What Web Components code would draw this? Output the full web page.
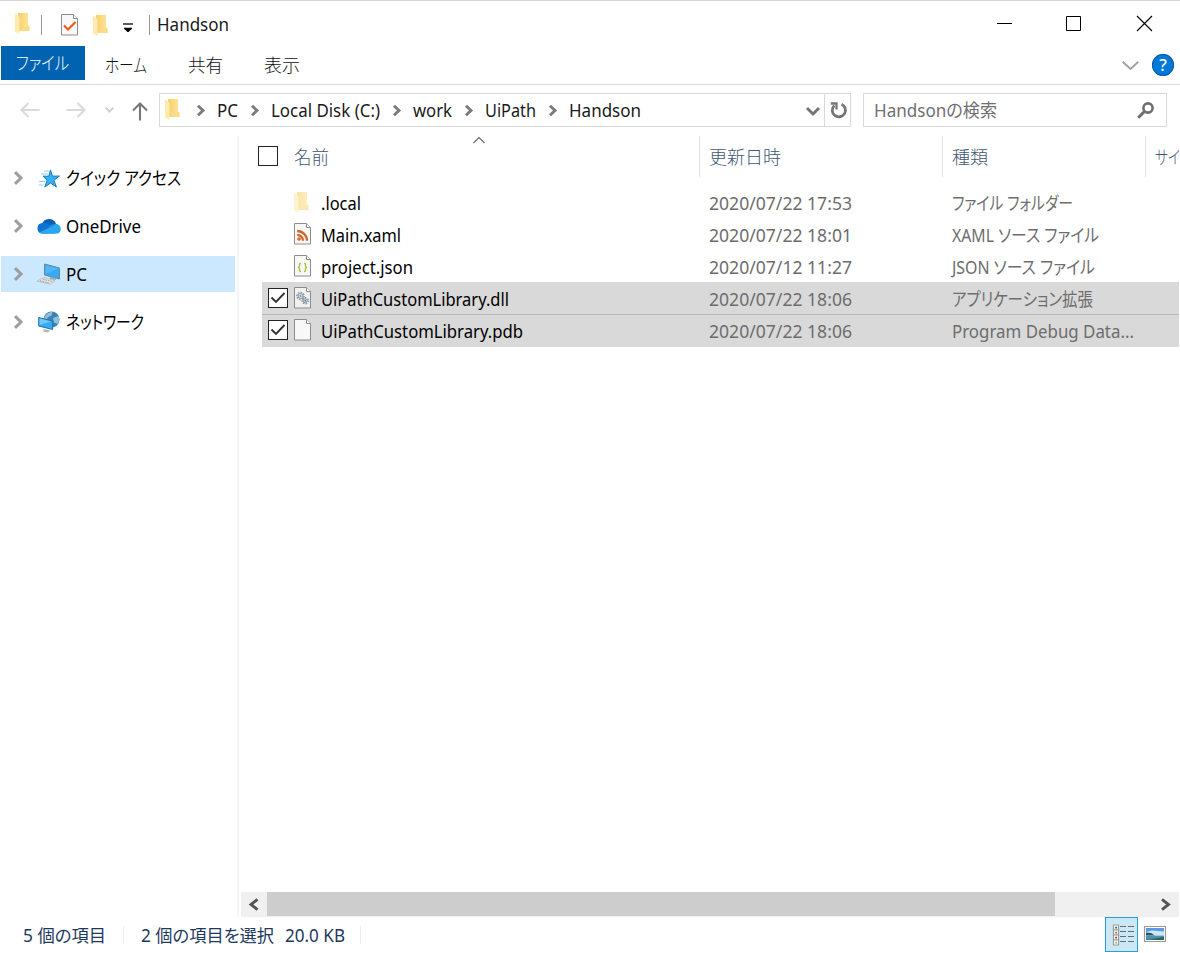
<!DOCTYPE html>
<html lang="ja">
<head>
<meta charset="utf-8">
<title>Handson</title>
<style>
  html, body { margin: 0; height: 100%; overflow: hidden; }
  body {
    background: #fff;
    font-family: "Noto Sans", "Noto Sans CJK JP", sans-serif;
    font-feature-settings: "palt"; /* narrow kana */
    font-size: 18px;
    line-height: 32px;
    color: #1a1a1a;
  }
</style>
</head>
<body>
<explorer-window></explorer-window>

<script>
const page = (fill = "#f8f8f8") => `
  <path d="M.5 .5h12l4 4v16.500H.5z" fill="${fill}" stroke="#8c8c8c"/>
  <path d="M12.500 .5v4h4" fill="#fff" stroke="#8c8c8c"/>`

const folder = `
  <path d="M3 0h10v13h1.500v5H3z" fill="url(#f)"/>
  <path d="M13 12.500l1.500 1v4.500H4z" fill="#f9dc85"/>
  <path d="M0 .5l4.500 3.500v17L0 18.500z" fill="#ffebae"/>
  <defs><linearGradient id="f"><stop stop-color="#f5d06c"/><stop offset="1" stop-color="#ffe59a"/></linearGradient></defs>`

const gear = (x, y, r) => `
  <circle cx="${x}" cy="${y}" r="${r}" fill="none" stroke="#8797a2" stroke-width="1.600" stroke-dasharray="1.500 1.200"/>
  <circle cx="${x}" cy="${y}" r="${r - 1}" fill="#dce4e8" stroke="#8797a2"/>
  <circle cx="${x}" cy="${y}" r=".9" fill="#72828e"/>`

// name: [width, height, markup]
const ICONS = {
  folder: [15, 21, folder],
  task: [17, 22, page() + `<path d="M3 11.500l4 4 7.500-7.500" fill="none" stroke="#f05a14" stroke-width="2.200"/>`],
  xaml: [17, 22, page() + `<circle cx="5" cy="16" r="1.800" fill="#d2672d"/><path d="M3.200 11.800a6 6 0 0 1 5.800 6M3.200 8a9.800 9.800 0 0 1 9.800 9.800" fill="none" stroke="#d2672d" stroke-width="2.300"/>`],
  json: [17, 22, page() + `<path d="M7 8.500H6.500q-1 0-1 1v2l-1 1 1 1v2q0 1 1 1H7M10 8.500h.5q1 0 1 1v2l1 1-1 1v2q0 1-1 1H10" fill="none" stroke="#b5bd3a" stroke-width="1.300"/>`],
  dll: [17, 22, page("#f0f0f0") + gear(6.500, 9, 3.500) + gear(11.200, 13.700, 3)],
  blank: [17, 22, page()],
  menu: [10, 9, `<path d="M0 1h10" stroke="#000" stroke-width="1.300"/><path d="M1 4.700h8v1L5.500 9h-1L1 5.700z"/>`],
  min: [15, 15, `<path d="M0 7.500h15" stroke="#000"/>`],
  max: [15, 15, `<path d="M.5 .5h14v14H.5z" fill="none" stroke="#000"/>`],
  close: [15, 15, `<path d="M0 0l15 15M15 0L0 15" stroke="#000" stroke-width="1.100"/>`],
  ribbon: [17, 9, `<path d="M.7 .7l7.800 7.300L16.300 .7" fill="none" stroke="#a0a0a0" stroke-width="1.900"/>`],
  back: [20, 16, `<path d="M19.500 8H1.500M8.500 1l-7 7 7 7" fill="none" stroke="#dadada" stroke-width="2.200"/>`],
  forward: [20, 16, `<path d="M.5 8h18M11.500 1l7 7-7 7" fill="none" stroke="#dadada" stroke-width="2.200"/>`],
  recent: [9, 6, `<path d="M.7 .7l3.800 3.800L8.300 .7" fill="none" stroke="#d0d0d0" stroke-width="2"/>`],
  up: [16, 19, `<path d="M8 18.500V1.500M1 8.500l7-7 7 7" fill="none" stroke="#777" stroke-width="2.100"/>`],
  crumb: [8, 11, `<path d="M1 .8l5 4.700-5 4.700" fill="none" stroke="#7a7a7a" stroke-width="2.900"/>`],
  expand: [9, 14, `<path d="M1 1.200l6 5.800-6 5.800" fill="none" stroke="#999" stroke-opacity=".95" stroke-width="3"/>`],
  down: [14, 9, `<path d="M1 1l6 6 6-6" fill="none" stroke="#757575" stroke-width="2.900"/>`],
  refresh: [17, 18, `<path d="M11.500 3.200A6.600 6.600 0 1 1 4.300 4.500" fill="none" stroke="#757575" stroke-width="2.800"/><path d="M.8 2.500h5.700v6" fill="none" stroke="#757575" stroke-width="2.300"/>`],
  search: [17, 17, `<circle cx="11" cy="6" r="4.600" fill="none" stroke="#6e6e6e" stroke-width="2.600"/><path d="M7.700 9.300L1.200 15.800" stroke="#6e6e6e" stroke-width="3"/>`],
  sort: [12, 7, `<path d="M.5 6L6 .5 11.500 6" fill="none" stroke="#666" stroke-width="1.100"/>`],
  check: [16, 12, `<path d="M1.500 5.500l4.500 4.500L14.500 1" fill="none" stroke="#333" stroke-width="1.900"/>`],
  left: [10, 12, `<path d="M8.500 .3L2 5.500l6.500 5.200" fill="none" stroke="#555" stroke-width="2.900"/>`],
  right: [10, 12, `<path d="M2 .3l6.500 5.200L2 10.700" fill="none" stroke="#555" stroke-width="2.900"/>`],
  star: [22, 19, `<path d="M12.500 1l2 6.200 7-.2-5.600 4.300 2.500 6.700-5.900-4-5.700 4 2.300-6.700-4-4.100 5.700 0z" fill="#35b2f5" stroke="#1278bd"/><path d="M6 2h5M3 5h7M1 12.500h6M1 16h4" stroke="#7cbfe6" stroke-width=".8"/>`],
  cloud: [24, 16, `<path d="M5 6a7.500 7.500 0 0 1 14-.5L14 11z" fill="#0a5fb5"/><path d="M4.800 15.500A5.300 5.300 0 0 1 5.500 5c4-.8 7 2 10 4.500L18 15.500z" fill="#0c73cf"/><path d="M11 9.200c2.500-3 7-4 9.300-2.200l-5 4z" fill="#188ade"/><path d="M2 14.500L16 8l3-2c5 0 6.500 7 2.500 9.300-1.500.7-16 .7-17.500.2z" fill="#2aa7ee"/>`],
  pc: [24, 22, `<path d="M7.500 1l15 4v11l-15-4z" fill="#37aaf3" stroke="#65889e"/><path d="M8.500 2.300l13 3.500L8.500 11z" fill="#60c2fb" opacity=".6"/><path d="M13 13.500l6 1.500v2l-6-1z" fill="#9aa8b0"/><path d="M0 18l7-3.500 11 3.200-5 3.500z" fill="#e1e5e7" stroke="#a9b2b7" stroke-width=".7"/><path d="M3 17.700l9 2.300M6 16.200l9 2.300" stroke="#9aa4aa" stroke-dasharray="1.500 1"/>`],
  network: [22, 22, `<circle cx="13.500" cy="8.500" r="8" fill="#3b83b3"/><path d="M6.500 6q3-5 8-5.200l-1 3.700-4 2-1 4-3-1zM15 7l5.500-2q2 4-.5 8l-4-1.500z" fill="#8fbfd8"/><path d="M.7 6.500l14 3.500v8.500l-14-3.500z" fill="#37aaf3" stroke="#25729f"/><path d="M1.500 7.500l11.500 3-11.500 3.500z" fill="#6bcaff"/><path d="M6 18l6 1.500-2 2-5-1z" fill="#b0babf"/>`],
  details: [22, 22, [0, 5, 10, 15].map((y, i) => `<path d="M1.500 ${y + 1}h5v5h-5z" fill="#fff" stroke="#999" stroke-width="1.200"/><path d="M3.200 ${y + 2.700}h1.800v1.800H3.200z" fill="${["#276a68", "#6a7a4c", "#b02a1f", "#8fae75"][i]}"/><path d="M8 ${y + 2.500}h6M16 ${y + 2.500}h6" stroke="#6b6b6b"/>`).join("")],
  picture: [22, 16, `<path d="M.5 .5h21v15H.5z" fill="#fff" stroke="#999" stroke-width="1.200"/><path d="M2 2h18v6H2z" fill="#5c98e5"/><path d="M2 6l6-1.500 12 1V9H2z" fill="#cce8f8"/><path d="M2 6.500l5 .5 4 2.500H2z" fill="#285b52"/><path d="M2 9.500h18V14H2z" fill="#4b8fb5"/><path d="M2 14l18-3v3z" fill="#286b4d"/>`]
}

class UiIcon extends HTMLElement {
  connectedCallback() {
    const [w, h, body] = ICONS[this.getAttribute("name")]
    this.attachShadow({ mode: "open" }).innerHTML = `
      <style>
        :host { display: block; flex: none; width: ${w}px; height: ${h}px; }
        svg { display: block; overflow: visible; }
      </style>
      <svg width="${w}" height="${h}" viewBox="0 0 ${w} ${h}">${body}</svg>`
  }
}
customElements.define("ui-icon", UiIcon)

// One line of text squeezed or stretched to the width in its "w" attribute
class FitText extends HTMLElement {
  connectedCallback() {
    const w = Number(this.getAttribute("w"))
    this.attachShadow({ mode: "open" }).innerHTML = `
      <style>
        :host { display: block; flex: none; width: ${w}px; white-space: nowrap; }
        span { display: inline-block; transform-origin: 0 50%; vertical-align: top; }
      </style>
      <span><slot></slot></span>`
    const span = this.shadowRoot.querySelector("span")
    span.style.transform = `scaleX(${w / span.getBoundingClientRect().width})`
  }
}
customElements.define("fit-text", FitText)

class TitleBar extends HTMLElement {
  constructor() {
    super()
    this.attachShadow({ mode: "open" }).innerHTML = `
      <style>
        :host { display: flex; height: 45px; border-top: 1px solid #d5d5d5; box-sizing: border-box; padding: 0 28px 0 15px; align-items: center; }
        i { width: 1px; height: 20px; background: #999; margin-top: 3px; }
        .first { margin: 1px 11px 0 0; }
        .task { margin: 4px 16px 0 19px; }
        .second { margin: 5px 15px 0 -1px; }
        .menu { margin: 8px 16px 0 0; }
        fit-text { margin: 2px auto 0 7px; }
        .buttons { display: flex; gap: 54px; margin-top: 1px; }
        .buttons ui-icon:last-child { margin-left: 2px; }
      </style>
      <ui-icon class="first" name="folder"></ui-icon><i></i>
      <ui-icon class="task" name="task"></ui-icon>
      <ui-icon class="second" name="folder"></ui-icon>
      <ui-icon class="menu" name="menu"></ui-icon><i></i>
      <fit-text w="72">Handson</fit-text>
      <div class="buttons">
        <ui-icon name="min"></ui-icon>
        <ui-icon name="max"></ui-icon>
        <ui-icon name="close"></ui-icon>
      </div>`
  }
}
customElements.define("title-bar", TitleBar)

class RibbonTabs extends HTMLElement {
  constructor() {
    super()
    this.attachShadow({ mode: "open" }).innerHTML = `
      <style>
        :host { display: flex; height: 40px; box-sizing: border-box; border-bottom: 1px solid #dadada; padding: 1px 6px 0 1px; align-items: flex-start; font-weight: 300; color: #111; }
        .file { background: #0063b1; color: #fff; height: 34px; width: 84px; box-sizing: border-box; padding: 1px 0 0 15px; }
        .tab { margin-top: 3px; }
        .help { width: 22px; height: 22px; border-radius: 50%; background: #0078d7; box-shadow: inset 0 0 0 1px #0c5ea5; color: #fff; font-size: 17px; font-weight: 500; line-height: 22px; text-align: center; margin: 8px 0 0 13px; }
      </style>
      <div class="file"><fit-text w="53">ファイル</fit-text></div>
      <fit-text class="tab" w="42" style="margin-left:20px">ホーム</fit-text>
      <fit-text class="tab" w="35" style="margin-left:41px">共有</fit-text>
      <fit-text class="tab" w="36" style="margin-left:41px">表示</fit-text>
      <ui-icon name="ribbon" style="margin:15px 0 0 auto"></ui-icon>
      <div class="help">?</div>`
  }
}
customElements.define("ribbon-tabs", RibbonTabs)

class AddressBar extends HTMLElement {
  constructor() {
    super()
    this.attachShadow({ mode: "open" }).innerHTML = `
      <style>
        :host { display: flex; height: 51px; padding: 8px 13px 0 20px; box-sizing: border-box; align-items: flex-start; }
        .nav { display: flex; align-items: center; height: 34px; width: 139px; }
        .box { display: flex; align-items: center; height: 34px; box-sizing: border-box; border: 1px solid #d9d9d9; }
        .path { width: 692px; padding-left: 5px; }
        .refresh { height: 32px; width: 26px; border-left: 1px solid #d9d9d9; margin-left: 4px; display: grid; place-items: center; box-sizing: border-box; }
        .search { width: 304px; margin-left: 12px; padding: 0 12px 0 10px; justify-content: space-between; color: #707070; }
        fit-text { margin-top: -1px; }
      </style>
      <div class="nav">
        <ui-icon name="back"></ui-icon>
        <ui-icon name="forward" style="margin-left:26px"></ui-icon>
        <ui-icon name="recent" style="margin-left:19px"></ui-icon>
        <ui-icon name="up" style="margin:3px 0 0 18px"></ui-icon>
      </div>
      <div class="box path">
        <ui-icon name="folder" style="margin-top:-2px"></ui-icon>
        <ui-icon name="crumb" style="margin-left:17px"></ui-icon>
        <fit-text w="21" style="margin-left:12px">PC</fit-text>
        <ui-icon name="crumb" style="margin-left:13px"></ui-icon>
        <fit-text w="109" style="margin-left:12px">Local Disk (C:)</fit-text>
        <ui-icon name="crumb" style="margin-left:13px"></ui-icon>
        <fit-text w="39" style="margin-left:12px">work</fit-text>
        <ui-icon name="crumb" style="margin-left:13px"></ui-icon>
        <fit-text w="51" style="margin-left:12px">UiPath</fit-text>
        <ui-icon name="crumb" style="margin-left:13px"></ui-icon>
        <fit-text w="72" style="margin-left:12px">Handson</fit-text>
        <ui-icon name="down" style="margin:3px 0 0 auto"></ui-icon>
        <div class="refresh"><ui-icon name="refresh" style="margin-left:2px"></ui-icon></div>
      </div>
      <div class="box search">
        <fit-text w="123">Handsonの検索</fit-text>
        <ui-icon name="search"></ui-icon>
      </div>`
  }
}
customElements.define("address-bar", AddressBar)

class NavItem extends HTMLElement {
  connectedCallback() {
    this.attachShadow({ mode: "open" }).innerHTML = `
      <style>
        :host { display: grid; grid-template-columns: 21px 31px auto; align-items: center; justify-content: start; height: 36px; padding-left: 13px; color: #000; }
        :host([selected]) { background: #cce8ff; }
        .pic { display: grid; place-items: center; width: 28px; }
      </style>
      <ui-icon name="expand"></ui-icon>
      <div class="pic"><ui-icon name="${this.getAttribute("icon")}"></ui-icon></div>
      <fit-text w="${this.getAttribute("w")}">${this.getAttribute("label")}</fit-text>`
  }
}
customElements.define("nav-item", NavItem)

class CheckBox extends HTMLElement {
  connectedCallback() {
    this.attachShadow({ mode: "open" }).innerHTML = `
      <style>
        :host { display: grid; place-items: center; width: 20px; height: 20px; box-sizing: border-box; border: 1px solid #222; background: #fff; }
      </style>
      ${this.hasAttribute("checked") ? `<ui-icon name="check"></ui-icon>` : ""}`
  }
}
customElements.define("check-box", CheckBox)

class FileHeader extends HTMLElement {
  constructor() {
    super()
    this.attachShadow({ mode: "open" }).innerHTML = `
      <style>
        :host { display: grid; grid-template-columns: 460px 243px 203px 35px; height: 41px; color: #3f5672; font-weight: 300; }
        div { display: flex; align-items: center; padding-left: 9px; border-left: 1px solid #e2e2e2; box-sizing: border-box; }
        .name { padding-left: 19px; border: 0; position: relative; }
        check-box { margin-right: 16px; margin-top: -1px; }
        .sort { position: absolute; left: 233.500px; top: 1px; }
      </style>
      <div class="name"><check-box></check-box><fit-text w="35">名前</fit-text><ui-icon class="sort" name="sort"></ui-icon></div>
      <div><fit-text w="72">更新日時</fit-text></div>
      <div><fit-text w="36">種類</fit-text></div>
      <div><fit-text w="25">サイ</fit-text></div>`
  }
}
customElements.define("file-header", FileHeader)

class FileRow extends HTMLElement {
  connectedCallback() {
    const at = name => this.getAttribute(name)
    this.attachShadow({ mode: "open" }).innerHTML = `
      <style>
        :host { display: grid; grid-template-columns: 32px 27px 388px 243px auto; align-items: center; justify-content: start; height: 32px; margin: 0 1px 0 23px; color: #6d6d6d; }
        :host([selected]) { background: #d9d9d9; box-shadow: inset 0 1px #b8b8b8; }
        :host([first]) { box-shadow: none; }
        :host([last]) { padding-bottom: 1px; }
        check-box { margin: 0 0 0 6px; }
        fit-text { line-height: 30px; margin-top: 2px; }
        .faded { opacity: .6; }
        .name { color: #000; }
      </style>
      ${this.hasAttribute("selected") ? "<check-box checked></check-box>" : "<i></i>"}
      <ui-icon class="${at("icon") === "folder" ? "faded" : ""}" name="${at("icon")}"></ui-icon>
      <fit-text class="name" w="${at("nw")}">${at("name")}</fit-text>
      <fit-text w="143">${at("date")}</fit-text>
      <fit-text w="${at("tw")}">${at("type")}</fit-text>`
  }
}
customElements.define("file-row", FileRow)

class ScrollBar extends HTMLElement {
  constructor() {
    super()
    this.attachShadow({ mode: "open" }).innerHTML = `
      <style>
        :host { display: flex; height: 25px; margin: 0 1px 0 2px; background: #f0f0f0; align-items: center; padding: 0 9px 0 8px; }
        div { width: 788px; height: 24px; background: #cdcdcd; margin: 0 auto 1px 8px; }
      </style>
      <ui-icon name="left"></ui-icon><div></div><ui-icon name="right"></ui-icon>`
  }
}
customElements.define("scroll-bar", ScrollBar)

class StatusBar extends HTMLElement {
  constructor() {
    super()
    this.attachShadow({ mode: "open" }).innerHTML = `
      <style>
        :host { display: flex; height: 36px; align-items: flex-start; padding: 0 14px 0 23px; color: #1e395b; font-size: 17.500px; }
        fit-text { margin-top: 2px; }
        i { width: 1px; height: 18px; background: #ededed; margin: 9px 17px 0 17px; }
        .view { width: 33px; height: 35px; box-sizing: border-box; border: 1px solid #26a0da; background: #cbe8f6; display: grid; place-items: center; margin: 0 6px 0 auto; }
        .view ui-icon { margin-left: 2px; }
      </style>
      <fit-text w="83">5 個の項目</fit-text><i></i>
      <fit-text w="133">2 個の項目を選択</fit-text>
      <fit-text w="60" style="margin-left:11px">20.0 KB</fit-text><i style="margin-left:15px"></i>
      <div class="view"><ui-icon name="details"></ui-icon></div>
      <ui-icon name="picture" style="margin-top:9px"></ui-icon>`
  }
}
customElements.define("status-bar", StatusBar)

class ExplorerWindow extends HTMLElement {
  constructor() {
    super()
    this.attachShadow({ mode: "open" }).innerHTML = `
      <style>
        :host { display: flex; flex-direction: column; width: 1180px; height: 953px; overflow: hidden; }
        main { display: grid; grid-template-columns: 239px 941px; height: 781px; }
        nav { display: flex; flex-direction: column; gap: 12px; padding: 24px 2px 0 1px; box-sizing: border-box; border-right: 2px solid #f5f5f5; }
        section { display: flex; flex-direction: column; min-width: 0; }
        .rows { padding-top: 9px; flex: 1; }
      </style>
      <title-bar></title-bar>
      <ribbon-tabs></ribbon-tabs>
      <address-bar></address-bar>
      <main>
        <nav>
          <nav-item icon="star" label="クイック アクセス" w="115"></nav-item>
          <nav-item icon="cloud" label="OneDrive" w="75"></nav-item>
          <nav-item icon="pc" label="PC" w="21" selected></nav-item>
          <nav-item icon="network" label="ネットワーク" w="78"></nav-item>
        </nav>
        <section>
          <file-header></file-header>
          <div class="rows">
            <file-row icon="folder" name=".local" nw="40" date="2020/07/22 17:53" type="ファイル フォルダー" tw="121"></file-row>
            <file-row icon="xaml" name="Main.xaml" nw="80" date="2020/07/22 18:01" type="XAML ソース ファイル" tw="147"></file-row>
            <file-row icon="json" name="project.json" nw="92" date="2020/07/12 11:27" type="JSON ソース ファイル" tw="143"></file-row>
            <file-row icon="dll" name="UiPathCustomLibrary.dll" nw="188" date="2020/07/22 18:06" type="アプリケーション拡張" tw="141" selected first></file-row>
            <file-row icon="blank" name="UiPathCustomLibrary.pdb" nw="202" date="2020/07/22 18:06" type="Program Debug Data..." tw="182" selected last></file-row>
          </div>
          <scroll-bar></scroll-bar>
        </section>
      </main>
      <status-bar></status-bar>`
  }
}
customElements.define("explorer-window", ExplorerWindow)
</script>
</body>
</html>
